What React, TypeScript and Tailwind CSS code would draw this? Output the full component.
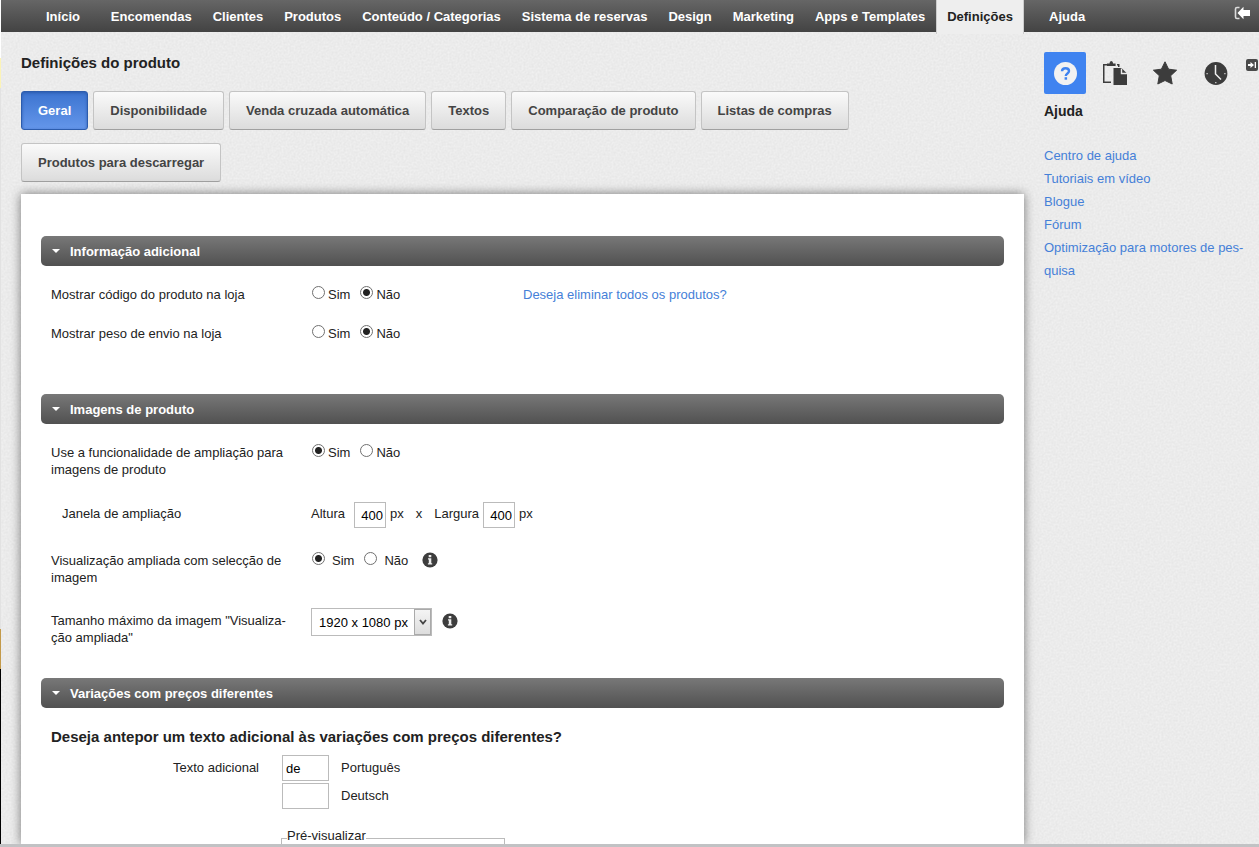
import React, { useState } from 'react';
import { clsx } from 'clsx';

const navItems = [
  'Início',
  'Encomendas',
  'Clientes',
  'Produtos',
  'Conteúdo / Categorias',
  'Sistema de reservas',
  'Design',
  'Marketing',
  'Apps e Templates',
  'Definições',
];

const tabs = [
  'Geral',
  'Disponibilidade',
  'Venda cruzada automática',
  'Textos',
  'Comparação de produto',
  'Listas de compras',
  'Produtos para descarregar',
];

const helpLinks = [
  'Centro de ajuda',
  'Tutoriais em vídeo',
  'Blogue',
  'Fórum',
  'Optimização para motores de pes\u00adquisa',
];

function PaperTexture() {
  return (
    <svg className="pointer-events-none absolute inset-0 -z-10 h-full w-full opacity-6" aria-hidden="true">
      <filter id="paper" x="0" y="0" width="100%" height="100%" colorInterpolationFilters="sRGB">
        <feTurbulence type="fractalNoise" baseFrequency="0.5" numOctaves="2" />
        <feColorMatrix values="1 0 0 0 0  1 0 0 0 0  1 0 0 0 0  0 0 0 0 1" />
      </filter>
      <rect width="100%" height="100%" filter="url(#paper)" />
    </svg>
  );
}

function InfoIcon() {
  return (
    <svg viewBox="0 0 16 16" className="size-4" aria-hidden="true">
      <circle cx="8" cy="8" r="7.6" fill="#3d3d3d" />
      <path d="M6.700 3h2.600v2.200H6.700zM6 6.300h3.300v5h.9v1.300H5.900v-1.300h.9V7.600H6z" fill="#eee" />
    </svg>
  );
}

function Section({ title, children }: { title: string; children: React.ReactNode }) {
  const [open, setOpen] = useState(true);
  return (
    <section>
      <button
        type="button"
        onClick={() => setOpen(!open)}
        className="flex h-[30px] w-full items-center rounded-[5px] bg-linear-to-b from-[#787878] to-[#515151] pl-[11px] font-bold text-white"
      >
        <svg viewBox="0 0 8 4" className="mr-[10px] h-1 w-2" aria-hidden="true">
          <path d="M0 0h8L4 4z" fill="#fff" />
        </svg>
        {title}
      </button>
      {open && <div className="px-[10px] pt-5">{children}</div>}
    </section>
  );
}

function Row({ label, className, children }: { label: React.ReactNode; className?: string; children: React.ReactNode }) {
  return (
    <div className={clsx('flex', className)}>
      <div className="w-[260px] shrink-0 pr-5">{label}</div>
      {children}
    </div>
  );
}

function YesNo({ name, initial, wide }: { name: string; initial: 'Sim' | 'Não'; wide?: boolean }) {
  const [value, setValue] = useState(initial);
  return (
    <div className="flex gap-[10px] pl-px">
      {(['Sim', 'Não'] as const).map((option) => (
        <label key={option} className={clsx('flex items-start', wide ? 'gap-[7px]' : 'gap-[3px]')}>
          <input
            type="radio"
            name={name}
            checked={value === option}
            onChange={() => setValue(option)}
            className="size-[13px] appearance-none rounded-full border border-[#707070] bg-white checked:bg-[radial-gradient(circle,#222_0_3px,transparent_4px)]"
          />
          {option}
        </label>
      ))}
    </div>
  );
}

export default function App() {
  const [tab, setTab] = useState('Geral');

  return (
    <div className="relative isolate flex h-screen overflow-hidden border-b-[3px] border-[#c1c2c4] bg-[#f3f3f3] font-['Liberation_Sans',Arial,sans-serif] text-[13px] leading-[17px] text-[#222]">
      <PaperTexture />
      <div className="flex w-px shrink-0 flex-col">
        <div className="h-[58px] bg-white" />
        <div className="h-[30px] bg-[#fbf3b8]" />
        <div className="h-[541px] bg-[#e2e2e2]" />
        <div className="h-10 bg-[#c39a4a]" />
        <div className="grow bg-black" />
      </div>

      <div className="flex min-w-0 flex-1 flex-col">
        <header className="flex h-8 shrink-0 bg-linear-to-b from-[#666] to-[#434343] leading-[33px] font-bold text-white">
          <nav className="flex flex-1 justify-between pl-[35px]">
            {navItems.map((item) => (
              <a
                key={item}
                href="#"
                className={clsx(
                  'px-[10px] whitespace-nowrap first:mr-[10px]',
                  item === 'Definições' && 'z-10 h-[34px] border-x border-[#ccc] bg-[#eee] text-[#222]'
                )}
              >
                {item}
              </a>
            ))}
          </nav>
          <div className="flex w-[235px] shrink-0 justify-between pr-[9px] pl-[25px]">
            <a href="#">Ajuda</a>
            <a href="#" aria-label="Sair" className="pt-[6px]">
              <svg viewBox="0 0 16 14" className="h-[14px] w-4" fill="none">
                <path d="M5.500 1.500H3Q1.500 1.500 1.500 3v8q0 1.500 1.500 1.500h2.500" stroke="#ddd" strokeWidth="1.600" />
                <path d="M3.500 7L9.500 .8v3.200H16v6H9.500v3.200z" fill="#fff" />
              </svg>
            </a>
          </div>
        </header>

        <div className="flex min-h-0 flex-1">
          <main className="flex min-w-0 flex-1 flex-col pl-5">
            <h1 className="mt-[22px] text-[15px] font-bold">Definições do produto</h1>
            <div className="mt-5 mb-3 flex flex-wrap gap-x-[5px] gap-y-[13px]">
              {tabs.map((t) => (
                <button
                  key={t}
                  type="button"
                  onClick={() => setTab(t)}
                  className={clsx(
                    'h-[39px] rounded-[3px] border px-4 font-bold',
                    t === tab
                      ? 'border-[#2c5cad] bg-linear-to-b from-[#3c74d0] to-[#6496ea] text-white shadow-[inset_0_1px_3px_#2c5cad]'
                      : 'border-[#c4c4c4] border-b-[#a0a0a0] bg-linear-to-b from-[#fafafa] to-[#dcdcdc] text-[#444]'
                  )}
                >
                  {t}
                </button>
              ))}
            </div>

            <div className="flex-1 overflow-hidden bg-white px-5 pt-[42px] shadow-[0_0_10px_rgba(0,0,0,0.5)]">
              <Section title="Informação adicional">
                <Row label="Mostrar código do produto na loja">
                  <div className="w-[212px]">
                    <YesNo name="codigo" initial="Não" />
                  </div>
                  <a href="#" className="text-[#4580d8]">Deseja eliminar todos os produtos?</a>
                </Row>
                <Row label="Mostrar peso de envio na loja" className="mt-[22px] mb-[52px]">
                  <YesNo name="peso" initial="Não" />
                </Row>
              </Section>

              <Section title="Imagens de produto">
                <Row label="Use a funcionalidade de ampliação para imagens de produto">
                  <YesNo name="ampliacao" initial="Sim" />
                </Row>
                <Row label={<span className="block pt-[3px] pl-[11px]">Janela de ampliação</span>} className="mt-6">
                  <label htmlFor="altura" className="pt-[3px]">Altura</label>
                  <input id="altura" defaultValue="400" className="mr-1 ml-[9px] h-[26px] w-8 border border-[#bbb] bg-white pr-[2px] text-right text-black" />
                  <span className="pt-[3px]">px</span>
                  <span className="mx-3 pt-[3px]">x</span>
                  <label htmlFor="largura" className="pt-[3px]">Largura</label>
                  <input id="largura" defaultValue="400" className="mr-1 ml-1 h-[26px] w-8 border border-[#bbb] bg-white pr-[2px] text-right text-black" />
                  <span className="pt-[3px]">px</span>
                </Row>
                <Row label="Visualização ampliada com selecção de imagem" className="mt-6">
                  <YesNo name="seleccao" initial="Sim" wide />
                  <button type="button" aria-label="Informação" className="ml-[14px] self-start">
                    <InfoIcon />
                  </button>
                </Row>
                <div className="mt-[22px] mb-8 flex">
                  <label htmlFor="tamanho" className="w-[260px] shrink-0 pt-1 pr-5">
                    Tamanho máximo da imagem "Visualiza&shy;ção ampliada"
                  </label>
                  <div className="relative self-start">
                    <select id="tamanho" className="block h-7 w-[121px] appearance-none border border-[#bbb] bg-white pl-[7px] text-black">
                      <option>1920 x 1080 px</option>
                    </select>
                    <span className="pointer-events-none absolute top-px right-px flex h-[26px] w-[17px] items-center justify-center border border-[#aaa] bg-linear-to-b from-[#f4f4f4] to-[#ddd]">
                      <svg viewBox="0 0 8 6" className="h-[6px] w-2" fill="none">
                        <path d="M1 1l3 3.500L7 1" stroke="#444" strokeWidth="1.800" />
                      </svg>
                    </span>
                  </div>
                  <button type="button" aria-label="Informação" className="mt-[5px] ml-[10px] self-start">
                    <InfoIcon />
                  </button>
                </div>
              </Section>

              <Section title="Variações com preços diferentes">
                <h2 className="text-[15px] font-bold">Deseja antepor um texto adicional às variações com preços diferentes?</h2>
                <div className="mt-[10px] flex">
                  <div className="w-[231px] shrink-0 pt-1 pr-[23px] text-right">Texto adicional</div>
                  <div className="space-y-[2px]">
                    <label className="flex gap-3">
                      <input defaultValue="de" className="h-[26px] w-[47px] border border-[#bbb] bg-white px-[3px] text-black" />
                      <span className="pt-1">Português</span>
                    </label>
                    <label className="flex gap-3">
                      <input className="h-[26px] w-[47px] border border-[#bbb] bg-white px-[3px] text-black" />
                      <span className="pt-1">Deutsch</span>
                    </label>
                  </div>
                </div>
                <fieldset className="mt-[18px] ml-[230px] h-20 w-56 border border-[#bbb] pl-[5px]">
                  <legend className="pb-[6px]">Pré-visualizar</legend>
                </fieldset>
              </Section>
            </div>
          </main>

          <aside className="w-[235px] shrink-0 pt-5 pl-5">
            <div className="flex items-start">
              <button type="button" aria-label="Ajuda" className="flex size-[42px] items-center justify-center rounded-[2px] bg-[#3f83f0]">
                <svg viewBox="0 0 24 24" className="size-6">
                  <circle cx="12.500" cy="12.500" r="11.500" fill="#f2f2f2" />
                  <path d="M9 10.300c.1-2 1.300-3 3.500-3s3.500 1.100 3.500 2.800c0 2.400-3.200 2.300-3.200 4.900" fill="none" stroke="#3f83f0" strokeWidth="2.400" />
                  <path d="M11.600 16.200h2.500v2.500h-2.500z" fill="#3f83f0" />
                </svg>
              </button>
              <button type="button" aria-label="Área de transferência" className="mt-[9px] ml-[17px]">
                <svg viewBox="0 0 24 24" className="size-6" fill="#3c3c3c">
                  <path d="M0 3h4v1.500H1.500v16H8V22H0zM14 3h2.500v3H15V4.500h-1z" />
                  <path d="M4 5V2.500h2.500Q6.500 0 8.300 0t1.800 2.500h2.500V5z" />
                  <path d="M10.500 7h8l5.500 5.500V24H10.500z" />
                  <path d="M18.500 7.500v5H24" fill="none" stroke="#ededed" strokeWidth="1.400" />
                </svg>
              </button>
              <button type="button" aria-label="Favoritos" className="mt-[9px] ml-[26px]">
                <svg viewBox="0 0 24 24" className="size-6" fill="#3c3c3c">
                  <path d="M12 .8l3.600 7.400 8 1-5.900 5.500 1.500 8.300L12 19.500 4.800 23l1.500-8.300L.4 9.200l8-1z" stroke="#3c3c3c" strokeWidth="1" strokeLinejoin="round" />
                </svg>
              </button>
              <button type="button" aria-label="Histórico" className="mt-[9px] ml-[27px]">
                <svg viewBox="0 0 24 24" className="size-6">
                  <circle cx="12" cy="12.500" r="11.400" fill="#3c3c3c" />
                  <path d="M11.500 4v9l5.500 5.500" fill="none" stroke="#f0f0f0" strokeWidth="1.500" />
                  <path d="M2.500 12h1.200v1.200H2.500zM20.300 12h1.200v1.200h-1.200zM11.200 21h1.200v1.200h-1.200z" fill="#ddd" />
                </svg>
              </button>
              <button type="button" aria-label="Recolher" className="mt-[7px] ml-auto pr-px">
                <svg viewBox="0 0 12 12" className="size-3">
                  <rect width="12" height="12" rx="2" fill="#4a4a4a" />
                  <path d="M2 5h2.500V3L8 6 4.500 9V7H2zM8.700 3H10v6H8.700z" fill="#fff" />
                </svg>
              </button>
            </div>
            <h2 className="mt-[9px] text-[14px] font-bold">Ajuda</h2>
            <ul className="mt-6 pr-3 leading-[23px] text-[#4580d8]">
              {helpLinks.map((link) => (
                <li key={link}>
                  <a href="#">{link}</a>
                </li>
              ))}
            </ul>
          </aside>
        </div>
      </div>
    </div>
  );
}
